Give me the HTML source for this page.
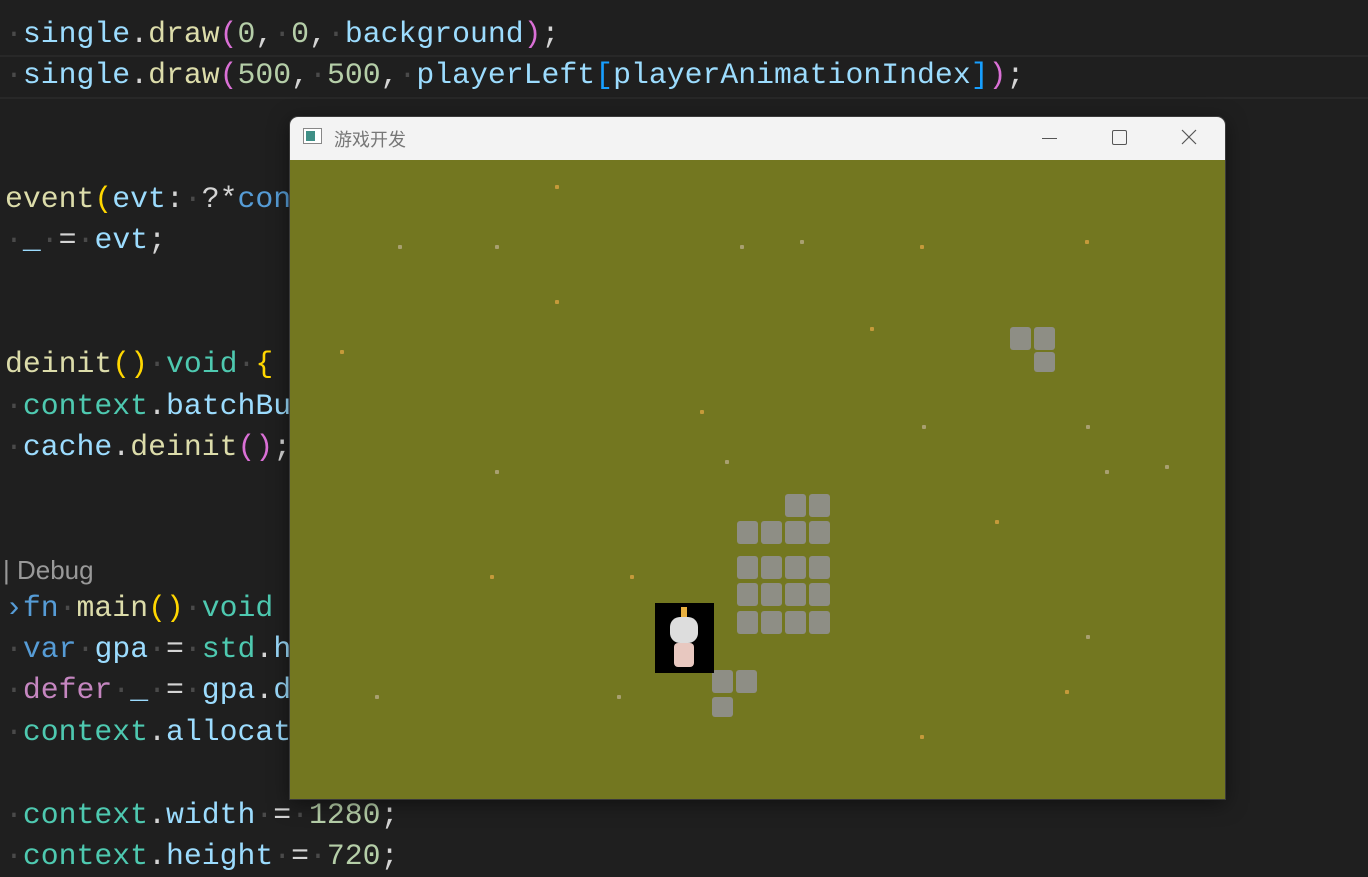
<!DOCTYPE html>
<html><head><meta charset="utf-8"><style>
body{margin:0;width:1368px;height:848px;background:#1f1f1f;overflow:hidden;position:relative;font-family:"Liberation Mono",monospace;}
.l{position:absolute;left:5px;font-size:29.8px;line-height:41px;white-space:pre;color:#d4d4d4;}
.d{color:#4a4a4a}.lb{color:#9cdcfe}.y{color:#dcdcaa}.p{color:#da70d6}.n{color:#b5cea8}.g{color:#ffd700}.b{color:#569cd6}.t{color:#4ec9b0}.k{color:#c586c0}.br{color:#179fff}
.hl{position:absolute;left:0;top:55px;width:1368px;height:40px;border-top:2px solid #282828;border-bottom:2px solid #282828;}
.win{position:absolute;left:290px;top:117px;width:935px;height:682px;border-radius:8px 8px 0 0;overflow:hidden;box-shadow:0 0 0 1px #3a3a3a,0 4px 20px rgba(0,0,0,.5);}
.tb{height:43px;background:#f3f3f3;position:relative;font-family:"Liberation Sans","Noto Sans CJK SC",sans-serif;}
.game{position:absolute;top:43px;left:0;width:935px;height:639px;background:#737720;}
.s{position:absolute;width:21px;height:23px;background:#8e8e85;border-radius:3px;}
.dot{position:absolute;width:4px;height:4px;background:#a8a070;border-radius:1px}
.o{position:absolute;width:4px;height:4px;background:#c59a3a;border-radius:1px}
</style></head><body>
<div class="hl"></div>
<div class="l" style="top:14px"><span class="d">·</span><span class="lb">single</span>.<span class="y">draw</span><span class="p">(</span><span class="n">0</span>,<span class="d">·</span><span class="n">0</span>,<span class="d">·</span><span class="lb">background</span><span class="p">)</span>;</div>
<div class="l" style="top:55px"><span class="d">·</span><span class="lb">single</span>.<span class="y">draw</span><span class="p">(</span><span class="n">500</span>,<span class="d">·</span><span class="n">500</span>,<span class="d">·</span><span class="lb">playerLeft</span><span class="br">[</span><span class="lb">playerAnimationIndex</span><span class="br">]</span><span class="p">)</span>;</div>
<div class="l" style="top:179px"><span class="y">event</span><span class="g">(</span><span class="lb">evt</span>:<span class="d">·</span>?*<span class="b">con</span></div>
<div class="l" style="top:220px"><span class="d">·</span><span class="lb">_</span><span class="d">·</span>=<span class="d">·</span><span class="lb">evt</span>;</div>
<div class="l" style="top:344px"><span class="y">deinit</span><span class="g">()</span><span class="d">·</span><span class="t">void</span><span class="d">·</span><span class="g">{</span></div>
<div class="l" style="top:386px"><span class="d">·</span><span class="t">context</span>.<span class="lb">batchBu</span></div>
<div class="l" style="top:427px"><span class="d">·</span><span class="lb">cache</span>.<span class="y">deinit</span><span class="p">()</span>;</div>
<div style="position:absolute;left:3px;top:555px;font-family:'Liberation Sans',sans-serif;font-size:26px;color:#999">| Debug</div>
<div class="l" style="top:588px"><span class="b">›</span><span class="b">fn</span><span class="d">·</span><span class="y">main</span><span class="g">()</span><span class="d">·</span><span class="t">void</span></div>
<div class="l" style="top:629px"><span class="d">·</span><span class="b">var</span><span class="d">·</span><span class="lb">gpa</span><span class="d">·</span>=<span class="d">·</span><span class="t">std</span>.<span class="lb">h</span></div>
<div class="l" style="top:670px"><span class="d">·</span><span class="k">defer</span><span class="d">·</span><span class="lb">_</span><span class="d">·</span>=<span class="d">·</span><span class="lb">gpa</span>.<span class="lb">d</span></div>
<div class="l" style="top:712px"><span class="d">·</span><span class="t">context</span>.<span class="lb">allocat</span></div>
<div class="l" style="top:795px"><span class="d">·</span><span class="t">context</span>.<span class="lb">width</span><span class="d">·</span>=<span class="d">·</span><span class="n">1280</span>;</div>
<div class="l" style="top:836px"><span class="d">·</span><span class="t">context</span>.<span class="lb">height</span><span class="d">·</span>=<span class="d">·</span><span class="n">720</span>;</div>

<div class="win">
 <div class="tb">
  <div style="position:absolute;left:13px;top:11px;width:19px;height:16px;border:1px solid #888;background:#fff;box-sizing:border-box"><div style="position:absolute;left:2px;top:2px;width:9px;height:10px;background:#3f8f86"></div></div>
  <div style="position:absolute;left:44px;top:9px;font-size:18px;color:#777">游戏开发</div>
  <div style="position:absolute;left:752px;top:21px;width:15px;height:1px;background:#555"></div>
  <div style="position:absolute;left:822px;top:13px;width:13px;height:13px;border:1px solid #555;border-radius:2px"></div>
  <svg style="position:absolute;left:891px;top:12px" width="16" height="16"><path d="M1 1L15 15M15 1L1 15" stroke="#555" stroke-width="1.2"/></svg>
 </div>
 <div class="game">
  <div class="s" style="left:495px;top:334px"></div><div class="s" style="left:519px;top:334px"></div>
  <div class="s" style="left:447px;top:361px"></div><div class="s" style="left:471px;top:361px"></div><div class="s" style="left:495px;top:361px"></div><div class="s" style="left:519px;top:361px"></div>
  <div class="s" style="left:447px;top:396px"></div><div class="s" style="left:471px;top:396px"></div><div class="s" style="left:495px;top:396px"></div><div class="s" style="left:519px;top:396px"></div>
  <div class="s" style="left:447px;top:423px"></div><div class="s" style="left:471px;top:423px"></div><div class="s" style="left:495px;top:423px"></div><div class="s" style="left:519px;top:423px"></div>
  <div class="s" style="left:447px;top:451px"></div><div class="s" style="left:471px;top:451px"></div><div class="s" style="left:495px;top:451px"></div><div class="s" style="left:519px;top:451px"></div>
  <div class="s" style="left:422px;top:510px"></div><div class="s" style="left:446px;top:510px"></div><div class="s" style="left:422px;top:537px;height:20px"></div>
  <div class="s" style="left:720px;top:167px"></div><div class="s" style="left:744px;top:167px"></div><div class="s" style="left:744px;top:192px;height:20px"></div>
  <div style="position:absolute;left:365px;top:443px;width:59px;height:70px;background:#000">
   <div style="position:absolute;left:15px;top:14px;width:28px;height:26px;background:#ddd;border-radius:10px"></div>
   <div style="position:absolute;left:26px;top:4px;width:6px;height:10px;background:#e8b040"></div>
   <div style="position:absolute;left:19px;top:40px;width:20px;height:24px;background:#e8c8c0;border-radius:4px"></div>
  </div>
  <div class="o" style="left:265px;top:25px"></div><div class="dot" style="left:108px;top:85px"></div><div class="dot" style="left:205px;top:85px"></div><div class="dot" style="left:450px;top:85px"></div><div class="dot" style="left:510px;top:80px"></div><div class="o" style="left:630px;top:85px"></div><div class="o" style="left:795px;top:80px"></div><div class="o" style="left:265px;top:140px"></div><div class="o" style="left:50px;top:190px"></div><div class="o" style="left:580px;top:167px"></div><div class="o" style="left:410px;top:250px"></div><div class="dot" style="left:632px;top:265px"></div><div class="dot" style="left:796px;top:265px"></div><div class="dot" style="left:205px;top:310px"></div><div class="dot" style="left:435px;top:300px"></div><div class="dot" style="left:815px;top:310px"></div><div class="dot" style="left:875px;top:305px"></div><div class="o" style="left:705px;top:360px"></div><div class="o" style="left:340px;top:415px"></div><div class="o" style="left:200px;top:415px"></div><div class="dot" style="left:796px;top:475px"></div><div class="dot" style="left:85px;top:535px"></div><div class="dot" style="left:327px;top:535px"></div><div class="o" style="left:775px;top:530px"></div><div class="o" style="left:630px;top:575px"></div>
 </div>
</div>
</body></html>
